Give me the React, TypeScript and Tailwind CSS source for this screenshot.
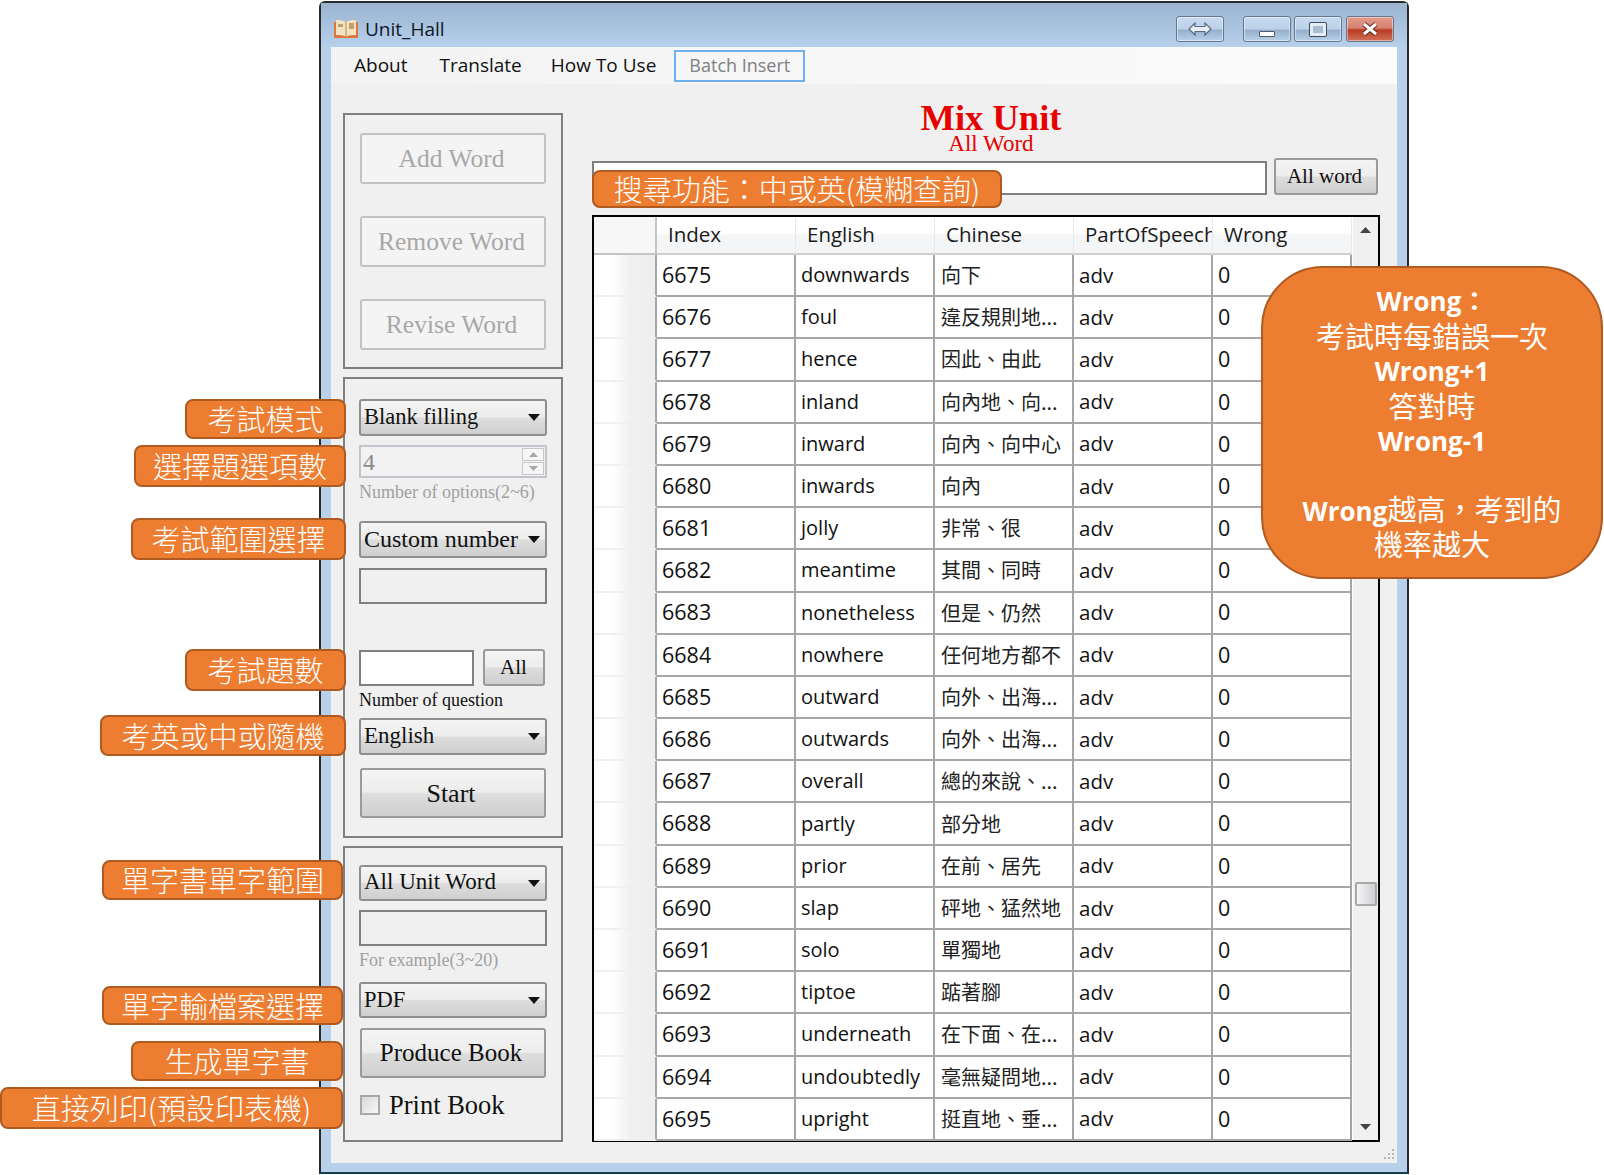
import React from 'react';

const cjk = '"Noto Sans CJK TC"';

const rows: [number, string, string][] = [
  [6675, 'downwards', '向下'],
  [6676, 'foul', '違反規則地...'],
  [6677, 'hence', '因此、由此'],
  [6678, 'inland', '向內地、向...'],
  [6679, 'inward', '向內、向中心'],
  [6680, 'inwards', '向內'],
  [6681, 'jolly', '非常、很'],
  [6682, 'meantime', '其間、同時'],
  [6683, 'nonetheless', '但是、仍然'],
  [6684, 'nowhere', '任何地方都不'],
  [6685, 'outward', '向外、出海...'],
  [6686, 'outwards', '向外、出海...'],
  [6687, 'overall', '總的來說、...'],
  [6688, 'partly', '部分地'],
  [6689, 'prior', '在前、居先'],
  [6690, 'slap', '砰地、猛然地'],
  [6691, 'solo', '單獨地'],
  [6692, 'tiptoe', '踮著腳'],
  [6693, 'underneath', '在下面、在...'],
  [6694, 'undoubtedly', '毫無疑問地...'],
  [6695, 'upright', '挺直地、垂...'],
];

const serif = "font-['Liberation_Serif','Noto_Sans_CJK_TC',serif]";
const sans = "font-['Open_Sans','Noto_Sans_CJK_TC',sans-serif]";
const glossy = 'bg-[linear-gradient(#f4f4f4_0%,#ededed_48%,#dddddd_52%,#cfcfcf_100%)]';

const Callout: React.FC<{ className: string; children: React.ReactNode }> = ({ className, children }) => (
  <div
    className={`absolute flex items-center justify-center rounded-[8px] border-2 border-[#ae5a21] bg-[#ed7d31] whitespace-nowrap text-[29px] font-light text-white font-['Noto_Sans_CJK_TC',sans-serif] ${className}`}
  >
    {children}
  </div>
);

const Combo: React.FC<{ label: string; className?: string; size?: string }> = ({
  label,
  className = '',
  size = 'text-[24px]',
}) => (
  <div
    className={`flex w-[188px] items-center justify-between rounded-[3px] border-2 border-[#8f8f8f] pl-[3px] pr-[5px] text-[#111] ${size} ${glossy} ${className}`}
  >
    <span className="-mt-[1px] whitespace-nowrap">{label}</span>
    <svg width="12" height="7" viewBox="0 0 12 7">
      <path d="M0 0h12L6 7z" fill="#111" />
    </svg>
  </div>
);

const PushButton: React.FC<{ label: string; className?: string }> = ({ label, className = '' }) => (
  <div
    className={`flex items-center justify-center rounded-[3px] border-2 border-[#9a9a9a] text-[#111] ${glossy} ${className}`}
  >
    {label}
  </div>
);

const DisabledButton: React.FC<{ label: string }> = ({ label }) => (
  <div className="flex h-[51px] w-[186px] items-center justify-center rounded-[3px] border-2 border-[#c2c2c2] bg-[#f4f4f4] pr-[3px] pt-[1px] text-[25.500px] text-[#a8a8a8]">
    {label}
  </div>
);

const TitleButton: React.FC<{ className?: string; children: React.ReactNode }> = ({ className = '', children }) => (
  <div
    className={`flex h-[26px] w-[48px] items-center justify-center rounded-[3px] border border-[#66788e] shadow-[inset_0_0_0_1px_rgba(255,255,255,0.45)] ${className}`}
  >
    {children}
  </div>
);

const blueBtn = 'bg-[linear-gradient(#c6d9ee_0%,#bcd2ea_50%,#95aecb_55%,#b9d0e8_100%)]';

export default function App() {
  return (
    <div className={`relative h-[1175px] w-[1604px] overflow-hidden bg-white pt-[1px] ${sans}`}>
      {/* window */}
      <div className="ml-[319px] flex h-[1173px] w-[1090px] flex-col rounded-t-[6px] border-2 border-[#2a2a2a] border-b-[#1a3a50] bg-[#b8d1eb]">
        <div className="flex h-[44px] items-center bg-[linear-gradient(#9ab4d1,#b7d1ec)] pl-[12px] pr-[13px] pt-[8px]">
          <svg width="26" height="20" viewBox="0 0 26 20">
            <path d="M1 3h24v16H1z" fill="#e0763f" />
            <path d="M3 1c4 0 8 0 10 3 2-3 6-3 10-3v15c-4 0-8 0-10 2-2-2-6-2-10-2z" fill="#f3e3c0" />
            <path d="M13 4v14" stroke="#b98b5a" />
            <path d="M16 4h5v6h-5zM5 5h5v3H5z" fill="#bfa070" />
          </svg>
          <span className="ml-[6px] text-[19px] leading-none text-[#101828]">Unit_Hall</span>
          <div className="ml-auto flex items-center">
            <TitleButton className={`mr-[19px] ${blueBtn}`}>
              <svg width="24" height="14" viewBox="0 0 24 14">
                <path
                  d="M1 7l6-6v3.5h10V1l6 6-6 6V9.500H7V13z"
                  fill="#e8eef6"
                  stroke="#5a6a7c"
                  strokeWidth="1.200"
                />
              </svg>
            </TitleButton>
            <TitleButton className={`mr-[3px] items-end pb-[4px] ${blueBtn}`}>
              <div className="mt-[9px] h-[6px] w-[16px] rounded-[1px] border border-[#4b5c70] bg-white" />
            </TitleButton>
            <TitleButton className={`mr-[4px] ${blueBtn}`}>
              <div className="h-[13px] w-[16px] rounded-[1px] border-[3px] border-[#e6edf5] bg-[#a9bed6] shadow-[0_0_0_1px_#3c4d60]" />
            </TitleButton>
            <TitleButton className="border-[#6d2f26] bg-[linear-gradient(#e39b8c_0%,#d8826f_45%,#b93a22_55%,#d0745c_100%)]">
              <svg width="18" height="14" viewBox="0 0 18 14">
                <path d="M3 2l12 10M15 2L3 12" stroke="#5c2c24" strokeWidth="5" />
                <path d="M3 2l12 10M15 2L3 12" stroke="#fff" strokeWidth="3" />
              </svg>
            </TitleButton>
          </div>
        </div>

        <div className="relative mx-[10px] h-[1116px] bg-[#f0f0f0]">
          {/* menu */}
          <div className="flex h-[37px] items-center bg-[linear-gradient(90deg,#f3f3f3,#fbfbfb)] pl-[23px] text-[19px] text-[#111]">
            <span>About</span>
            <span className="ml-[32px]">Translate</span>
            <span className="ml-[29px]">How To Use</span>
            <span className="ml-[18px] flex h-[32px] w-[131px] items-center justify-center border-2 border-[#6fb0ee] text-[18px] text-[#808080]">
              Batch Insert
            </span>
          </div>

          <div className="flex pl-[12px]">
            {/* left column */}
            <div className={`flex w-[220px] flex-col gap-[8px] pt-[29px] ${serif}`}>
              <div className="flex h-[256px] flex-col items-start gap-[32px] border-2 border-[#7f7f7f] pl-[15px] pt-[18px]">
                <DisabledButton label="Add Word" />
                <DisabledButton label="Remove Word" />
                <DisabledButton label="Revise Word" />
              </div>

              <div className="flex h-[461px] flex-col items-start border-2 border-[#7f7f7f] pl-[14px] pt-[20px]">
                <Combo label="Blank filling" className="h-[37px]" size="text-[22.500px]" />
                <div className="mt-[9px] flex h-[33px] w-[188px] items-center justify-between border-2 border-[#c0c6cc] bg-[#f2f2f2] pl-[2px] pr-[1px] text-[24px] text-[#8a8a8a]">
                  <span>4</span>
                  <div className="flex flex-col gap-[1px]">
                    <div className="flex h-[13px] w-[22px] items-center justify-center border border-[#c8c8c8] bg-[#f6f6f6]">
                      <svg width="9" height="5" viewBox="0 0 9 5"><path d="M4.500 0L9 5H0z" fill="#a8a8a8" /></svg>
                    </div>
                    <div className="flex h-[13px] w-[22px] items-center justify-center border border-[#c8c8c8] bg-[#f6f6f6]">
                      <svg width="9" height="5" viewBox="0 0 9 5"><path d="M0 0h9L4.500 5z" fill="#a8a8a8" /></svg>
                    </div>
                  </div>
                </div>
                <div className="mt-[3px] h-[22px] text-[18px] leading-[22px] whitespace-nowrap text-[#a0a0a0]">Number of options(2~6)</div>
                <Combo label="Custom number" className="mt-[18px] h-[37px]" />
                <div className="mt-[10px] h-[36px] w-[188px] border-2 border-[#7f7f7f] bg-[#f0f0f0]" />
                <div className="mt-[45px] flex h-[37px] w-[186px] justify-between">
                  <div className="mt-[1px] h-[36px] w-[115px] border-2 border-[#7f7f7f] bg-white" />
                  <PushButton label="All" className="h-[37px] w-[62px] pr-[1px] text-[21px]" />
                </div>
                <div className="mt-[3px] h-[22px] text-[18px] leading-[22px] whitespace-nowrap text-[#111]">Number of question</div>
                <Combo label="English" className="mt-[7px] h-[37px]" size="text-[23px]" />
                <PushButton label="Start" className="ml-[1px] mt-[13px] h-[50px] w-[186px] pr-[4px] text-[26px]" />
              </div>

              <div className="flex h-[296px] flex-col items-start border-2 border-[#7f7f7f] pl-[14px] pt-[17px]">
                <Combo label="All Unit Word" className="h-[36px]" size="text-[23px]" />
                <div className="mt-[9px] h-[36px] w-[188px] border-2 border-[#7f7f7f] bg-[#f0f0f0]" />
                <div className="mt-[3px] h-[22px] text-[18px] leading-[22px] whitespace-nowrap text-[#a0a0a0]">For example(3~20)</div>
                <Combo label="PDF" className="mt-[11px] h-[36px]" size="text-[22.500px]" />
                <PushButton label="Produce Book" className="ml-[1px] mt-[10px] h-[50px] w-[186px] pr-[4px] text-[25px]" />
                <div className="ml-[1px] mt-[17px] flex h-[20px] items-center">
                  <div className="h-[20px] w-[20px] border-2 border-[#a8a8a8] bg-[linear-gradient(135deg,#d8d8d8,#f8f8f8)]" />
                  <span className="ml-[9px] text-[26.500px] leading-none text-[#111]">Print Book</span>
                </div>
              </div>
            </div>

            {/* right column */}
            <div className="ml-[29px] flex w-[788px] flex-col">
              <div className={`flex flex-col items-center pl-[10px] pt-[18px] text-[#e60000] ${serif}`}>
                <div className="h-[32px] text-[36.500px] font-bold leading-[32px]">Mix Unit</div>
                <div className="h-[22px] text-[23px] leading-[20px]">All Word</div>
              </div>
              <div className="mt-[2px] flex h-[37px]">
                <div className="mt-[3px] h-[34px] w-[675px] border-2 border-[#7f7f7f] bg-white" />
                <PushButton label="All word" className={`ml-[7px] h-[37px] w-[104px] pr-[3px] text-[21px] ${serif}`} />
              </div>

              {/* grid */}
              <div className="mt-[20px] flex h-[927px] border-2 border-black bg-white">
                <div className="w-[759px]">
                  <div className="flex h-[38px] text-[20.500px] text-[#1a1a1a]">
                    <div className="w-[63px] border-r-2 border-b-2 border-[#c4c4c4] bg-[#f7f7f7]" />
                    {['Index', 'English', 'Chinese', 'PartOfSpeech', 'Wrong'].map((h) => (
                      <div
                        key={h}
                        className="flex w-[139px] items-center overflow-hidden border-r border-b-2 border-r-[#e6e8ea] border-b-[#d0d0d0] bg-[linear-gradient(#ffffff_0%,#ffffff_45%,#f4f5f7_50%,#f4f5f7_100%)] pb-[1px] pl-[11px] whitespace-nowrap"
                      >
                        {h}
                      </div>
                    ))}
                  </div>
                  {rows.map(([idx, en, zh]) => (
                    <div key={idx} className="flex h-[42.200px] text-[20.500px] text-[#111]">
                      <div className="w-[63px] border-r-2 border-b-2 border-r-[#a6a6a6] border-b-[#f0f0f0] bg-[linear-gradient(90deg,#ffffff_30%,#f0f0f0_60%,#eeeeee_100%)]" />
                      <div className="flex w-[139px] items-center border-r-2 border-b-2 border-[#a6a6a6] pl-[5px] text-[21.500px]">{idx}</div>
                      <div className="flex w-[139px] items-center border-r-2 border-b-2 border-[#a6a6a6] pl-[5px] text-[20px] whitespace-nowrap">{en}</div>
                      <div
                        className="flex w-[139px] items-center overflow-hidden border-r-2 border-b-2 border-[#a6a6a6] pl-[6px] text-[20px] whitespace-nowrap text-[#222]"
                        style={{ fontFamily: cjk }}
                      >
                        {zh}
                      </div>
                      <div className="flex w-[139px] items-center border-r-2 border-b-2 border-[#a6a6a6] pl-[5px]">adv</div>
                      <div className="flex w-[139px] items-center border-r-2 border-b-2 border-[#a6a6a6] pl-[5px] text-[21.500px]">0</div>
                    </div>
                  ))}
                </div>
                {/* scrollbar */}
                <div className="flex w-[25px] flex-col items-center bg-[#f0f0f0] pt-[10px]">
                  <svg width="11" height="6" viewBox="0 0 11 6"><path d="M5.500 0L11 6H0z" fill="#444" /></svg>
                  <div className="mt-[649px] h-[24px] w-[22px] rounded-[2px] border-2 border-[#a8a8a8] bg-[linear-gradient(90deg,#f4f4f4,#cfcfd4)]" />
                  <svg className="mt-[218px]" width="11" height="6" viewBox="0 0 11 6"><path d="M0 0h11L5.500 6z" fill="#444" /></svg>
                </div>
              </div>
            </div>
          </div>

          <svg className="absolute bottom-[2px] right-[2px]" width="14" height="14" viewBox="0 0 14 14">
            <path d="M11 2h2v2h-2zM7 6h2v2H7zM11 6h2v2h-2zM3 10h2v2H3zM7 10h2v2H7zM11 10h2v2h-2z" fill="#b8b8b8" />
          </svg>
        </div>
      </div>

      {/* annotations over the window */}
      <Callout className="left-[185px] top-[399px] h-[40px] w-[161px]">考試模式</Callout>
      <Callout className="left-[134px] top-[445px] h-[42px] w-[212px]">選擇題選項數</Callout>
      <Callout className="left-[131px] top-[518px] h-[42px] w-[215px]">考試範圍選擇</Callout>
      <Callout className="left-[185px] top-[649px] h-[42px] w-[161px]">考試題數</Callout>
      <Callout className="left-[100px] top-[715px] h-[41px] w-[246px]">考英或中或隨機</Callout>
      <Callout className="left-[102px] top-[860px] h-[40px] w-[241px]">單字書單字範圍</Callout>
      <Callout className="left-[102px] top-[986px] h-[39px] w-[241px]">單字輸檔案選擇</Callout>
      <Callout className="left-[131px] top-[1041px] h-[40px] w-[212px]">生成單字書</Callout>
      <Callout className="left-[0px] top-[1087px] h-[42px] w-[343px]">直接列印(預設印表機)</Callout>
      <Callout className="left-[592px] top-[170px] h-[38px] w-[410px]">搜尋功能：中或英(模糊查詢)</Callout>

      <div className="absolute left-[1261px] top-[266px] flex h-[313px] w-[342px] flex-col items-center justify-center rounded-[62px] border-2 border-[#ae5a21] bg-[#ed7d31] text-[29px] leading-[35px] text-white">
        <div className="h-[35px] text-[26px] font-bold">Wrong：</div>
        <div className="h-[35px]">考試時每錯誤一次</div>
        <div className="h-[35px] text-[26px] font-bold">Wrong+1</div>
        <div className="h-[35px]">答對時</div>
        <div className="h-[35px] text-[26px] font-bold">Wrong-1</div>
        <div className="h-[33px]" />
        <div className="h-[35px]"><span className="text-[26px] font-bold">Wrong</span>越高，考到的</div>
        <div className="h-[35px]">機率越大</div>
      </div>
    </div>
  );
}
